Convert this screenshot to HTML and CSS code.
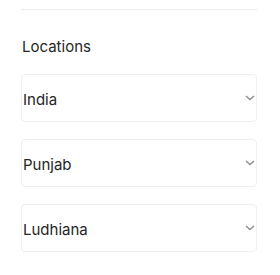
FILE: index.html
```html
<!DOCTYPE html>
<html lang="en">
<head>
  <meta charset="UTF-8" />
  <title>Locations</title>
  <link rel="stylesheet" href="styles.css">
</head>
<body>
  <div class="panel">
    <div class="divider"></div>
    <div class="label">Locations</div>
    <div class="fields">
      <div class="select-box">
        <span>India</span>
        <svg class="chevron" width="10" height="6" viewBox="0 0 10 6"><path d="M1 1l4 3.6L9 1" fill="none" stroke="#909090" stroke-width="1.5"/></svg>
      </div>
      <div class="select-box">
        <span>Punjab</span>
        <svg class="chevron" width="10" height="6" viewBox="0 0 10 6"><path d="M1 1l4 3.6L9 1" fill="none" stroke="#909090" stroke-width="1.5"/></svg>
      </div>
      <div class="select-box">
        <span>Ludhiana</span>
        <svg class="chevron" width="10" height="6" viewBox="0 0 10 6"><path d="M1 1l4 3.6L9 1" fill="none" stroke="#909090" stroke-width="1.5"/></svg>
      </div>
    </div>
  </div>
</body>
</html>
```

FILE: styles.css
```css
body {
  margin: 0;
  background: #fff;
  font-family: 'Inter', sans-serif;
  color: #262626;
}

.panel {
  width: 236px;
  padding: 9px 0 0 21px;
}

.divider {
  border-top: 1px solid #ececec;
}

.label {
  margin-top: 28px;
  font-size: 15px;
  line-height: 18px;
  padding-left: 1px;
}

.fields {
  display: flex;
  flex-direction: column;
  gap: 17px;
  margin-top: 18px;
}

.select-box {
  height: 46px;
  border: 1px solid #efefef;
  border-radius: 4px;
  display: flex;
  align-items: center;
  justify-content: space-between;
  padding: 0 0 0 1px;
  font-size: 15px;
}

.select-box span {
  padding-top: 3px;
}

.chevron {
  margin-right: 1px;
  margin-top: -1px;
}
```
